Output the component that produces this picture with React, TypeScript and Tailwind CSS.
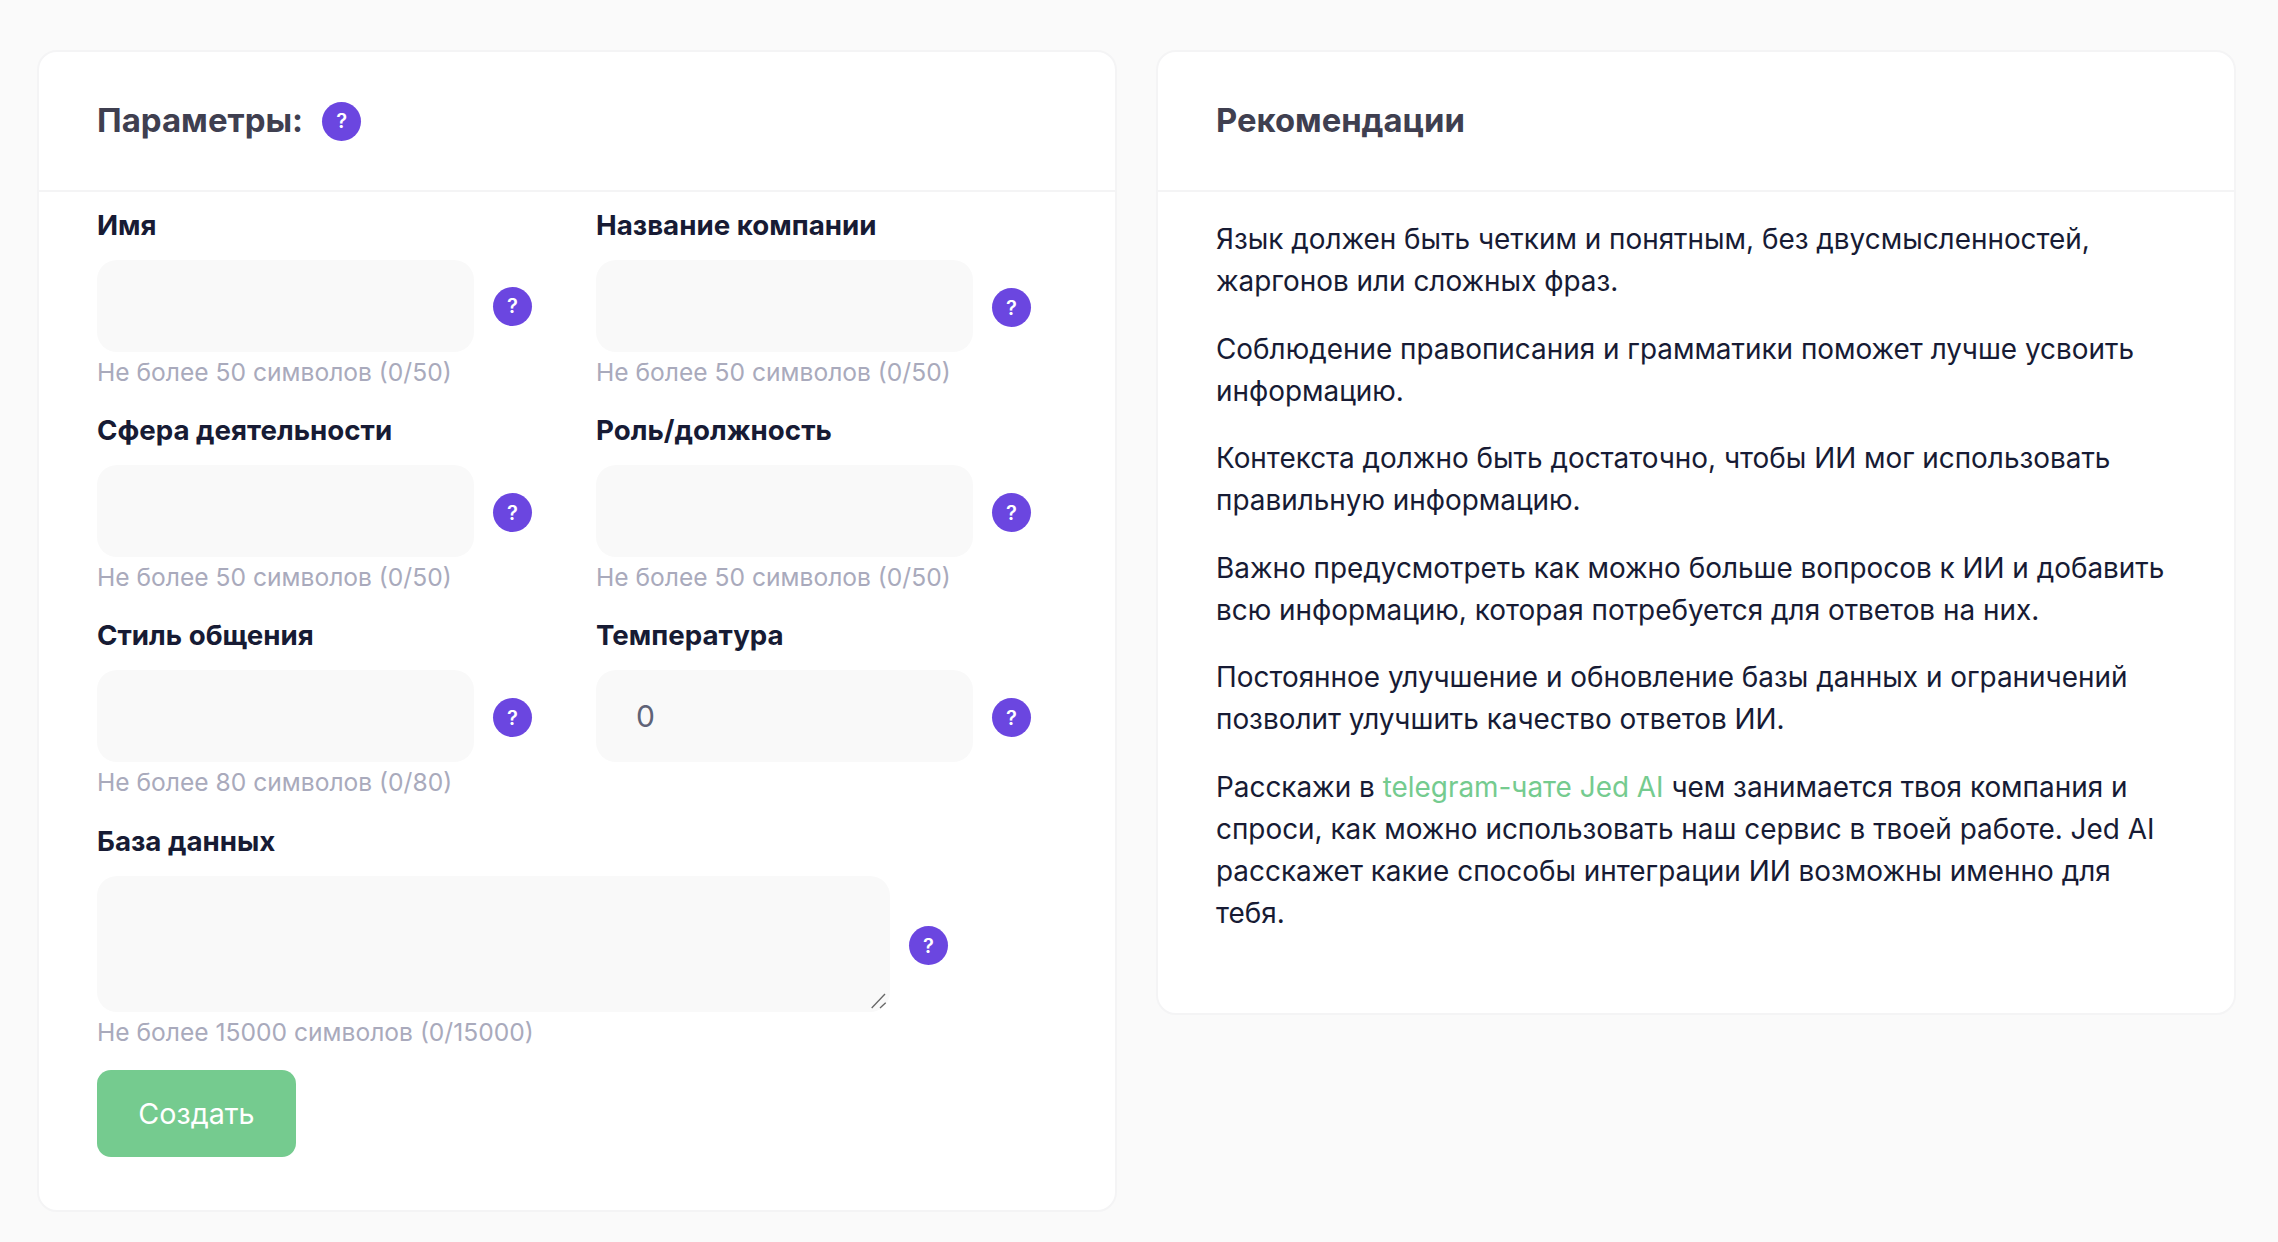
const font = { fontFamily: "Inter, 'Noto Sans', sans-serif" };

const Help = ({ className = "" }: { className?: string }) => (
    <span className={`flex h-[39px] w-[39px] shrink-0 items-center justify-center rounded-full bg-[#6b46e0] text-[20px] font-semibold text-white ${className}`}>
        ?
    </span>
);

const Field = ({ label, hint, value, raised }: { label: string; hint?: string; value?: string; raised?: boolean }) => (
    <div className="flex flex-col">
        <label className="mb-[17px] h-[35px] text-[27.7px] leading-[35px] font-bold text-[#171b34]">{label}</label>
        <div className="flex items-center gap-[19px]">
            <input
                readOnly
                value={value ?? ""}
                className="h-[92px] w-[377px] rounded-[20px] bg-[#f9f9f9] px-10 text-[30px] text-[#5f6377] outline-none"
            />
            <Help className={raised ? "" : "mt-[3px]"} />
        </div>
        {hint && <p className="mt-[3px] h-[34px] text-[24.6px] leading-[34px] text-[#a9aabc]">{hint}</p>}
    </div>
);

const advice = [
    "Язык должен быть четким и понятным, без двусмысленностей, жаргонов или сложных фраз.",
    "Соблюдение правописания и грамматики поможет лучше усвоить информацию.",
    "Контекста должно быть достаточно, чтобы ИИ мог использовать правильную информацию.",
    "Важно предусмотреть как можно больше вопросов к ИИ и добавить всю информацию, которая потребуется для ответов на них.",
    "Постоянное улучшение и обновление базы данных и ограничений позволит улучшить качество ответов ИИ.",
];

const App = () => {
    return (
        <div className="flex min-h-[1242px] items-start gap-[39px] bg-[#fafafa] pt-[50px] pr-[42px] pl-[37px]" style={font}>
            {/* Parameters */}
            <section className="w-[1080px] rounded-[20px] border-2 border-[#f4f4f5] bg-white pb-[53px]">
                <header className="flex h-[140px] items-center gap-[19px] border-b-2 border-[#f4f4f5] px-[58px]">
                    <h2 className="text-[33px] font-bold text-[#3f3f50]">Параметры:</h2>
                    <Help />
                </header>
                <div className="px-[58px] pt-[16px]">
                    <div className="grid grid-cols-[499px_1fr] gap-y-[24px]">
                        <Field label="Имя" hint="Не более 50 символов (0/50)" raised />
                        <Field label="Название компании" hint="Не более 50 символов (0/50)" />
                        <Field label="Сфера деятельности" hint="Не более 50 символов (0/50)" />
                        <Field label="Роль/должность" hint="Не более 50 символов (0/50)" />
                        <Field label="Стиль общения" hint="Не более 80 символов (0/80)" />
                        <Field label="Температура" value="0" />
                    </div>
                    <div className="mt-[25px] flex flex-col">
                        <label className="mb-[17px] h-[35px] text-[27.7px] leading-[35px] font-bold text-[#171b34]">База данных</label>
                        <div className="flex items-center gap-[19px]">
                            <div className="relative h-[136px] w-[793px]">
                                <textarea readOnly className="h-full w-full resize-none rounded-[20px] bg-[#f9f9f9] outline-none" />
                                {/* Resize grip */}
                                <svg className="absolute right-[3px] bottom-[3px]" width="16" height="16" viewBox="0 0 16 16" fill="none" stroke="#666" strokeWidth="1.3">
                                    <path d="M0.7 15 14 1" />
                                    <path d="M9 15 14.7 9.7" />
                                </svg>
                            </div>
                            <Help className="mt-[3px]" />
                        </div>
                        <p className="mt-[3px] h-[34px] text-[24.6px] leading-[34px] text-[#a9aabc]">Не более 15000 символов (0/15000)</p>
                    </div>
                    <button className="mt-[21px] h-[87px] w-[199px] rounded-[14px] bg-[#75cb8f] text-[28.7px] text-white">
                        Создать
                    </button>
                </div>
            </section>

            {/* Recommendations */}
            <section className="w-[1080px] rounded-[20px] border-2 border-[#f4f4f5] bg-white pb-[79px]">
                <header className="flex h-[140px] items-center border-b-2 border-[#f4f4f5] px-[58px]">
                    <h2 className="text-[32.8px] font-bold text-[#3f3f50]">Рекомендации</h2>
                </header>
                <div className="flex flex-col gap-[25.6px] px-[58px] pt-[26px] text-[27.9px] leading-[42px] text-[#171b34]">
                    {advice.map((text) => (
                        <p key={text}>{text}</p>
                    ))}
                    <p>
                        Расскажи в <a className="text-[#75cb8f]">telegram-чате Jed AI</a> чем занимается твоя компания и
                        спроси, как можно использовать наш сервис в твоей работе. Jed AI расскажет какие способы
                        интеграции ИИ возможны именно для тебя.
                    </p>
                </div>
            </section>
        </div>
    );
};

export default App;
